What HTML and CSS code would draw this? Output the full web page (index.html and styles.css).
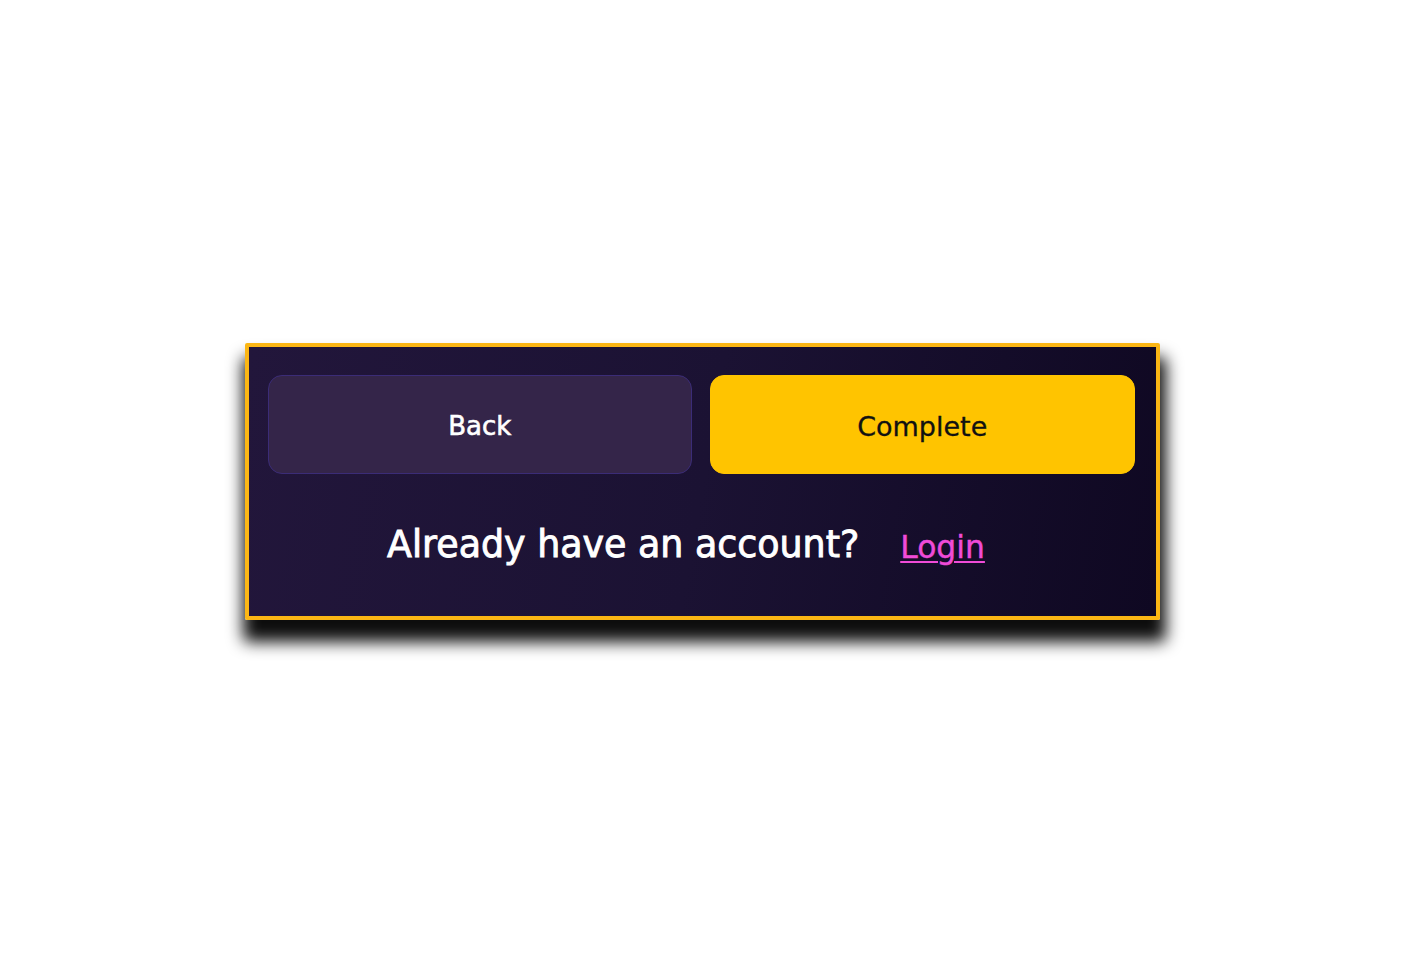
FILE: index.html
```html
<!DOCTYPE html>
<html>
<head>
<meta charset="utf-8">
<link rel="stylesheet" href="styles.css">
</head>
<body>
<div class="stage">
  <div class="panel">
    <div class="actions">
      <button class="btn btn-back">Back</button>
      <button class="btn btn-complete">Complete</button>
    </div>
    <div class="footer">
      <span class="question">Already have an account?</span>
      <a class="login" href="#">Login</a>
    </div>
  </div>
</div>
</body>
</html>
```
FILE: styles.css
```css
html, body {
  margin: 0;
  padding: 0;
  background: #ffffff;
}
.stage {
  box-sizing: border-box;
  min-height: 100vh;
  padding-top: 2px;
  display: flex;
  align-items: center;
  justify-content: center;
  font-family: "DejaVu Sans", "Open Sans", sans-serif;
}
.panel {
  box-sizing: border-box;
  width: 915px;
  height: 277px;
  border: 4px solid #fbb614;
  border-radius: 2px;
  background: linear-gradient(100deg, #22163b 0%, #1b1233 50%, #0f0822 100%);
  box-shadow: 2px 18px 16px 4px rgba(0, 0, 0, 0.95);
  padding: 28px 21px 0 19px;
  display: flex;
  flex-direction: column;
}
.actions {
  display: flex;
  gap: 18px;
}
.btn {
  flex: 1;
  height: 99px;
  padding-top: 4px;
  border-radius: 14px;
  font-family: inherit;
  font-size: 26px;
  font-weight: 400;
  cursor: pointer;
}
.btn-back {
  background: #342549;
  border: 1px solid #3b2c77;
  color: #ffffff;
  -webkit-text-stroke: 0.6px #ffffff;
}
.btn-complete {
  background: #ffc400;
  border: 1px solid #ffc400;
  color: #111111;
  font-size: 27px;
  -webkit-text-stroke: 0.3px #111111;
}
.footer {
  flex: 1;
  display: flex;
  align-items: center;
  justify-content: center;
  gap: 41px;
  padding: 0 30px 2px 0;
}
.question {
  color: #ffffff;
  font-size: 36.4px;
  font-weight: 400;
  -webkit-text-stroke: 0.9px #ffffff;
}
.login {
  color: #f04bd8;
  font-size: 31.4px;
  font-weight: 400;
  -webkit-text-stroke: 0.4px #f04bd8;
  text-decoration: underline;
  text-decoration-thickness: 2px;
  text-underline-offset: 3px;
  margin-top: 6px;
}
```
